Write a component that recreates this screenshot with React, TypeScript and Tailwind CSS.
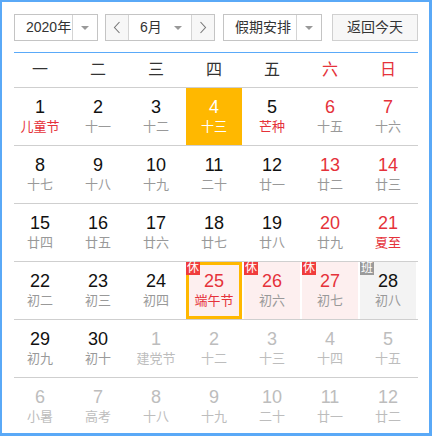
import React from "react";

type Day = {
  n: number;
  l: string;
  other?: boolean;
  red?: boolean;
  lunarRed?: boolean;
  today?: boolean;
  selected?: boolean;
  badge?: "休" | "班";
};

const rows: Day[][] = [
  [
    { n: 1, l: "儿童节", lunarRed: true },
    { n: 2, l: "十一" },
    { n: 3, l: "十二" },
    { n: 4, l: "十三", today: true },
    { n: 5, l: "芒种", lunarRed: true },
    { n: 6, l: "十五", red: true },
    { n: 7, l: "十六", red: true },
  ],
  [
    { n: 8, l: "十七" },
    { n: 9, l: "十八" },
    { n: 10, l: "十九" },
    { n: 11, l: "二十" },
    { n: 12, l: "廿一" },
    { n: 13, l: "廿二", red: true },
    { n: 14, l: "廿三", red: true },
  ],
  [
    { n: 15, l: "廿四" },
    { n: 16, l: "廿五" },
    { n: 17, l: "廿六" },
    { n: 18, l: "廿七" },
    { n: 19, l: "廿八" },
    { n: 20, l: "廿九", red: true },
    { n: 21, l: "夏至", red: true, lunarRed: true },
  ],
  [
    { n: 22, l: "初二" },
    { n: 23, l: "初三" },
    { n: 24, l: "初四" },
    { n: 25, l: "端午节", red: true, lunarRed: true, selected: true, badge: "休" },
    { n: 26, l: "初六", red: true, badge: "休" },
    { n: 27, l: "初七", red: true, badge: "休" },
    { n: 28, l: "初八", badge: "班" },
  ],
  [
    { n: 29, l: "初九" },
    { n: 30, l: "初十" },
    { n: 1, l: "建党节", other: true },
    { n: 2, l: "十二", other: true },
    { n: 3, l: "十三", other: true },
    { n: 4, l: "十四", other: true },
    { n: 5, l: "十五", other: true },
  ],
  [
    { n: 6, l: "小暑", other: true },
    { n: 7, l: "高考", other: true },
    { n: 8, l: "十八", other: true },
    { n: 9, l: "十九", other: true },
    { n: 10, l: "二十", other: true },
    { n: 11, l: "廿一", other: true },
    { n: 12, l: "廿二", other: true },
  ],
];

const weekdays = ["一", "二", "三", "四", "五", "六", "日"];

function Caret() {
  return (
    <svg width="8" height="4" viewBox="0 0 8 4">
      <polygon points="0,0 8,0 4,4" fill="#999" />
    </svg>
  );
}

function Chevron({ dir }: { dir: "l" | "r" }) {
  return (
    <svg width="8" height="13" viewBox="0 0 8 13">
      <polyline
        points={dir === "l" ? "6.5,1 1.5,6.5 6.5,12" : "1.5,1 6.5,6.5 1.5,12"}
        fill="none"
        stroke="#777"
        strokeWidth="1.1"
      />
    </svg>
  );
}

function Cell({ d }: { d: Day }) {
  let bg = "";
  if (d.today) bg = "bg-[#ffb800]";
  else if (d.badge === "休") bg = "bg-[#fdefef]";
  else if (d.badge === "班") bg = "bg-[#f3f3f3]";

  let numColor = "text-[#111]";
  let lunColor = "text-[#999]";
  if (d.other) {
    numColor = "text-[#bdbdbd]";
    lunColor = "text-[#bdbdbd]";
  } else if (d.today) {
    numColor = "text-white";
    lunColor = "text-white";
  } else {
    if (d.red) numColor = "text-[#e5323a]";
    if (d.lunarRed) lunColor = "text-[#e5323a]";
  }

  return (
    <div className="pr-[2px] h-[57px]">
      <div
        className={`relative h-full flex flex-col items-center ${bg} ${
          d.selected ? "border-[3px] border-[#ffb800] pt-[5px]" : "pt-[8px]"
        }`}
      >
        {d.badge && (
          <div
            className={`absolute ${d.selected ? "-left-[3px] -top-[3px]" : "left-0 top-0"} w-[14px] h-[13px] flex items-center justify-center text-[12px] leading-[13px] text-white ${
              d.badge === "休" ? "bg-[#f03c3c]" : "bg-[#9a9a9a]"
            }`}
          >
            {d.badge}
          </div>
        )}
        <div className={`text-[18px] leading-[22px] ${numColor}`}>{d.n}</div>
        <div className={`text-[13px] leading-[16px] mt-px ${lunColor}`}>{d.l}</div>
      </div>
    </div>
  );
}

export default function App() {
  return (
    <div className="w-[432px] h-[436px] overflow-hidden bg-white border-l-2 border-t-2 border-r-[3px] border-b-[3px] border-[#5aa9f7] pl-[12px] pt-[12px] font-['Liberation_Sans','Noto_Sans_CJK_SC',sans-serif]">
      <div className="w-[404px]">
        <div className="flex h-[27px] text-[14px] text-[#333]">
          <div className="w-[84px] flex border border-[#c4c4c4]">
            <div className="flex-1 flex items-center pl-[11px]">2020年</div>
            <div className="w-[25px] border-l border-[#d4d4d4] flex items-center justify-center">
              <Caret />
            </div>
          </div>
          <div className="ml-[7px] w-[110px] flex border border-[#c4c4c4]">
            <div className="w-[23px] bg-[#f7f7f7] border-r border-[#d4d4d4] flex items-center justify-center">
              <Chevron dir="l" />
            </div>
            <div className="flex-1 flex items-center justify-between pl-[11px] pr-[9px]">
              <span>6月</span>
              <Caret />
            </div>
            <div className="w-[23px] bg-[#f7f7f7] border-l border-[#d4d4d4] flex items-center justify-center">
              <Chevron dir="r" />
            </div>
          </div>
          <div className="ml-[8px] w-[99px] flex border border-[#c4c4c4]">
            <div className="flex-1 flex items-center pl-[11px]">假期安排</div>
            <div className="w-[25px] border-l border-[#d4d4d4] flex items-center justify-center">
              <Caret />
            </div>
          </div>
          <div className="ml-auto w-[86px] flex items-center justify-center border border-[#d0d0d0] bg-[#f7f7f7]">
            返回今天
          </div>
        </div>

        <div className="mt-[11px] h-px bg-[#5aaaf9]" />

        <div className="-ml-[2px] w-[406px] grid grid-cols-7 h-[34px] text-[16px]">
          {weekdays.map((w, i) => (
            <div
              key={w}
              className={`pr-[2px] flex items-center justify-center ${
                i >= 5 ? "text-[#e5323a]" : "text-[#333]"
              }`}
            >
              {w}
            </div>
          ))}
        </div>

        {rows.map((r, ri) => (
          <div key={ri} className="border-t border-[#cfcfcf]">
            <div className="-ml-[2px] w-[406px] grid grid-cols-7">
              {r.map((d, di) => (
                <Cell key={di} d={d} />
              ))}
            </div>
          </div>
        ))}
      </div>
    </div>
  );
}
